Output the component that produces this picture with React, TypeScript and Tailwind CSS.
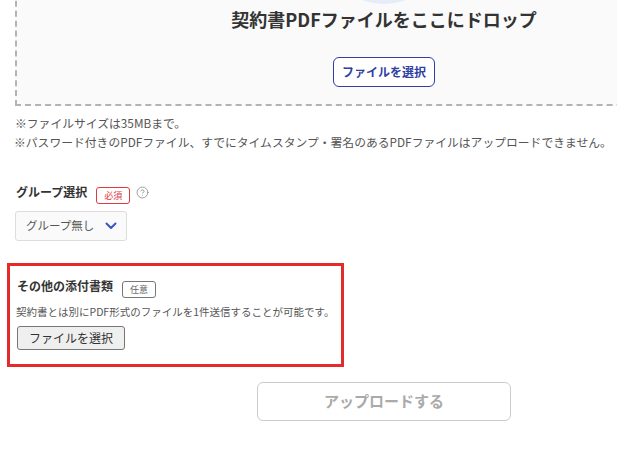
import { CircleHelp } from "lucide-react";

const font = "font-['Noto_Sans_CJK_JP','Noto_Sans',sans-serif]";

function Badge({ label, tone }: { label: string; tone: "required" | "optional" }) {
  return (
    <span
      className={`inline-flex h-[17px] items-center rounded-[3px] border px-[7px] text-[9px] leading-none ${
        tone === "required"
          ? "border-[#e0393e] text-[#e0393e]"
          : "border-[#777] text-[#666]"
      }`}
    >
      {label}
    </span>
  );
}

export default function App() {
  return (
    <div className={`h-[475px] w-[617px] overflow-hidden bg-white ${font}`}>
      <div className="w-[768px] px-[15px]">
        {/* ドロップエリア */}
        <div className="-mt-[138px] flex flex-col items-center border-2 border-dashed border-[#b3b3b3] bg-[#fafafa] pb-[17px] pt-[20px]">
          <div className="h-[120px] w-[120px] rounded-full bg-[#e6edf9]" />
          <h2 className="mt-[1px] text-[18px] font-bold leading-[28px] text-[#333]">
            契約書PDFファイルをここにドロップ
          </h2>
          <button className="mt-[24px] h-[30px] rounded-[6px] border border-[#2f3f9f] bg-white px-[8px] text-[12px] font-bold text-[#2f3f9f]">
            ファイルを選択
          </button>
        </div>

        <div className="mt-[7px] text-[11.8px] leading-[19px] text-[#555]">
          <p>※ファイルサイズは35MBまで。</p>
          <p className="-ml-[1px] whitespace-nowrap">
            ※パスワード付きのPDFファイル、すでにタイムスタンプ・署名のあるPDFファイルはアップロードできません。
          </p>
        </div>

        {/* グループ選択 */}
        <div className="mt-[32px] flex h-[18px] items-center">
          <span className="pl-[1px] text-[12px] font-bold text-[#333]">グループ選択</span>
          <span className="ml-[9px]">
            <Badge label="必須" tone="required" />
          </span>
          <CircleHelp size={13} strokeWidth={1.5} className="ml-[6px] text-[#888]" />
        </div>
        <div className="mt-[10px] flex h-[30px] w-[112px] items-center rounded-[3px] border border-[#dddddd] bg-[#fafafa] pl-[10px]">
          <span className="whitespace-nowrap text-[11.5px] text-[#555]">グループ無し</span>
          <svg width="12" height="8" viewBox="0 0 12 8" className="ml-auto mr-[9px] shrink-0">
            <path d="M1.5 1.5 L6 6 L10.5 1.5" fill="none" stroke="#3a55c4" strokeWidth="2" strokeLinecap="round" strokeLinejoin="round" />
          </svg>
        </div>

        {/* その他の添付書類 */}
        <div className="-ml-[8px] mt-[22px] w-[337px] border-[3px] border-[#e32b2b] pb-[14px] pl-[6px] pt-[11px]">
          <div className="flex h-[17px] items-center">
            <span className="pl-[1px] text-[12px] font-bold text-[#333]">その他の添付書類</span>
            <span className="ml-[9px]">
              <Badge label="任意" tone="optional" />
            </span>
          </div>
          <p className="mt-[10px] whitespace-nowrap text-[10.5px] leading-[16px] text-[#555]">
            契約書とは別にPDF形式のファイルを1件送信することが可能です。
          </p>
          <button className="ml-[1px] mt-[6px] h-[24px] w-[108px] rounded-[3px] border border-[#767676] bg-[#efefef] text-[12px] text-[#333]">
            ファイルを選択
          </button>
        </div>

        <div className="mt-[15px] flex justify-center">
          <button className="h-[39px] w-[254px] rounded-[6px] border border-[#cccccc] bg-white text-[15px] font-bold text-[#aaaaaa]">
            アップロードする
          </button>
        </div>
      </div>
    </div>
  );
}
